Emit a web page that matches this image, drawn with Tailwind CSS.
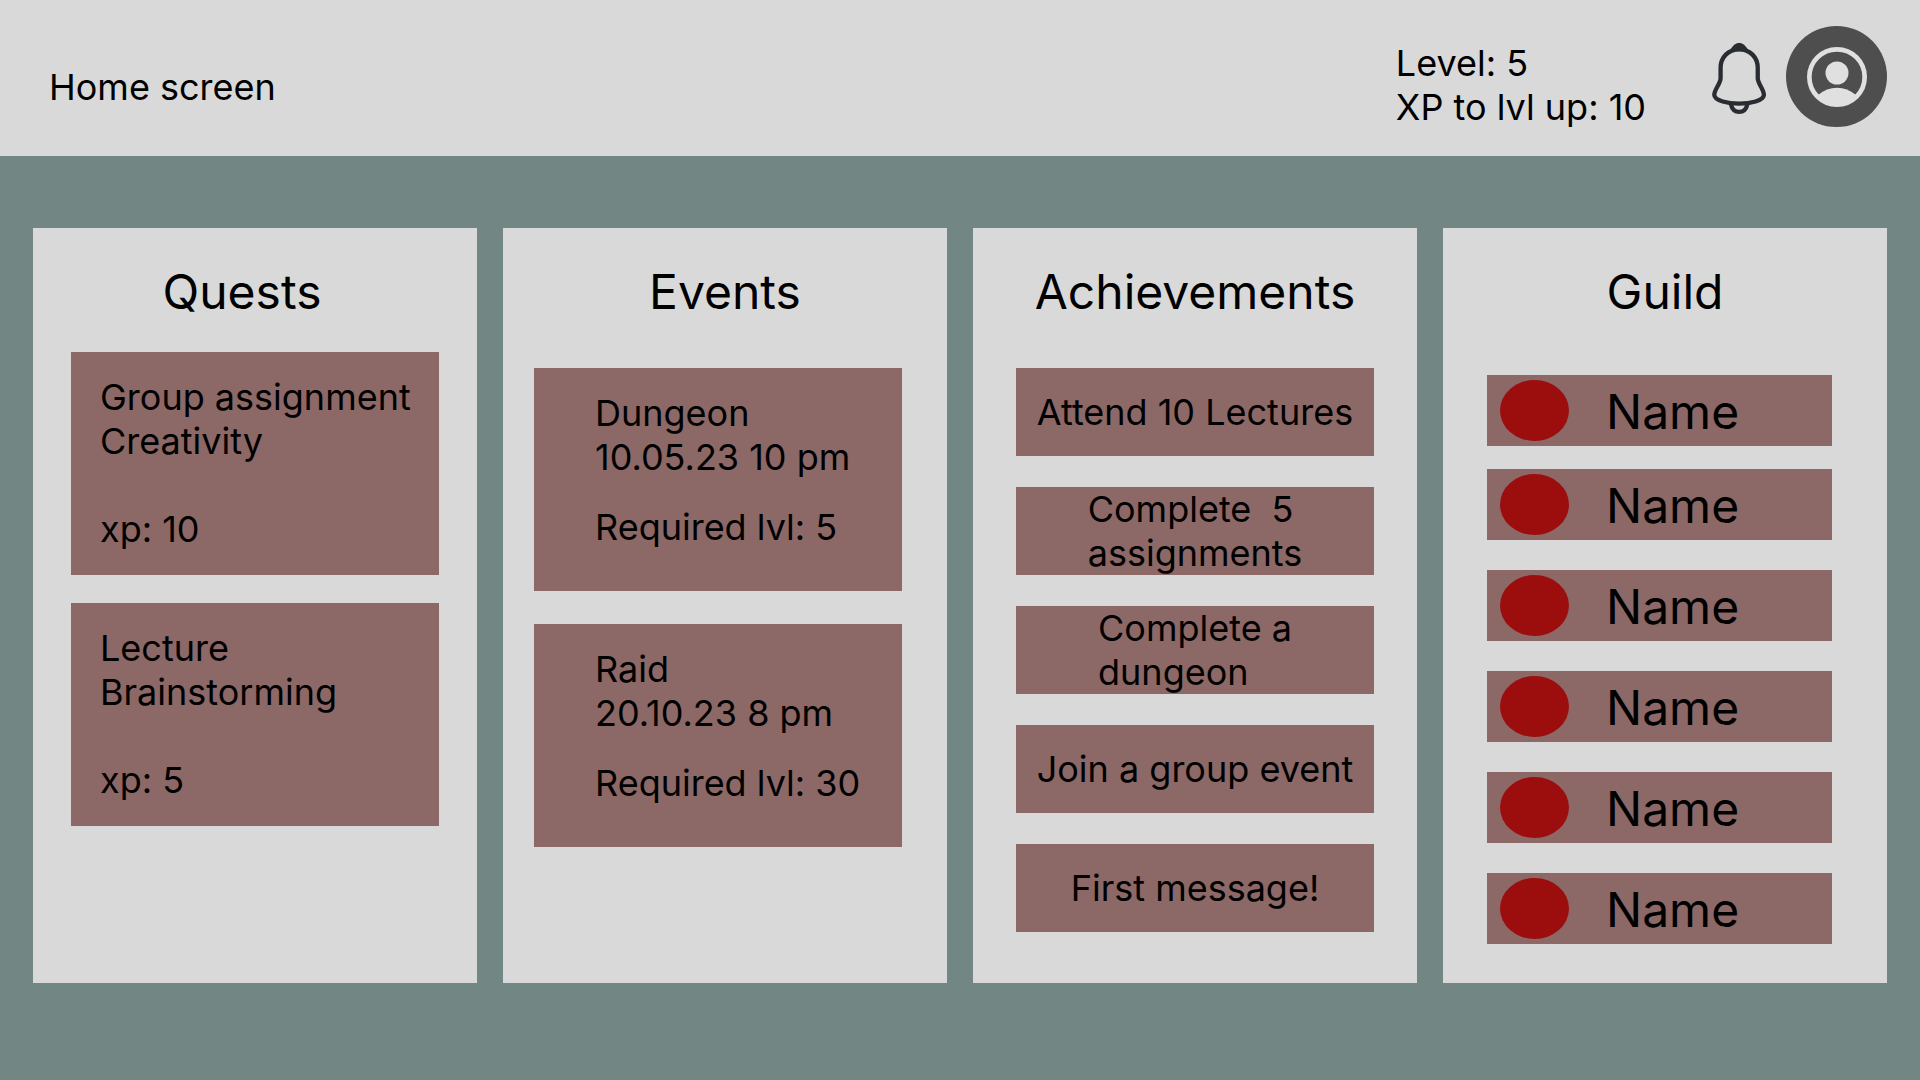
<!DOCTYPE html>
<html lang="en">
<head>
<meta charset="utf-8">
<meta name="viewport" content="width=device-width, initial-scale=1">
<title>Home screen</title>
<script src="https://cdn.jsdelivr.net/npm/@tailwindcss/browser@4"></script>
</head>
<body class="min-h-screen bg-[#728684] font-['Inter',sans-serif] text-[36px] leading-[44px] text-black">
  <header class="flex items-start justify-between bg-[#d9d9d9] pl-[49px] pr-[33px] min-h-[156px]">
    <h1 class="pt-[65px]">Home screen</h1>
    <div class="flex items-start">
      <div class="pt-[41px] mr-[66px]">
        <p>Level: 5</p>
        <p>XP to lvl up: 10</p>
      </div>
      <button type="button" aria-label="Notifications" class="mt-[43px] mr-5">
        <svg class="block w-[54px] h-[71px]" viewBox="156 128 162 214" fill="none" stroke="#292d32" stroke-width="13">
          <path d="M237.500 147C205 147 181.500 171 181.500 203V234C181.500 250 162.500 268 162.500 284C162.500 302 205 311 237.500 311S312 302 312 284C312 268 293.500 250 293.500 234V203C293.500 171 270 147 237.500 147Z"/>
          <path d="M212 147C221 132 229 128 237.500 128S254 132 263 147L250 153H225Z" fill="#292d32" stroke="none"/>
          <path d="M213 314C217 330 227 335.500 237.500 335.500S258 330 262 314"/>
        </svg>
      </button>
      <button type="button" aria-label="Profile" class="mt-[26px]">
        <svg class="block size-[101px]" viewBox="378 78 303 303">
          <circle cx="529.500" cy="229.500" r="151.500" fill="#4e4e4e"/>
          <circle cx="531" cy="231" r="83" fill="none" stroke="#e0e0e0" stroke-width="14"/>
          <circle cx="531" cy="219" r="34.500" fill="#e0e0e0"/>
          <path d="M475 284C492 270 510 263 531 263S570 270 587 284L590 289A83 83 0 0 1 472 289Z" fill="#e0e0e0"/>
        </svg>
      </button>
    </div>
  </header>

  <main class="grid grid-cols-4 gap-[26px] px-[33px] pt-[72px] pb-[97px]">
    <section class="bg-[#d9d9d9] pt-[35px] pb-[39px]">
      <h2 class="pr-[26px] text-center text-[48px] leading-[58px]">Quests</h2>
      <div class="mt-[31px] flex flex-col gap-7 px-[38px]">
        <article class="bg-[#8c6867] pl-[29px] pt-[23px] pb-6">
          <h3>Group assignment</h3>
          <p>Creativity</p>
          <p class="pt-11">xp: 10</p>
        </article>
        <article class="bg-[#8c6867] pl-[29px] pt-[23px] pb-6">
          <h3>Lecture</h3>
          <p>Brainstorming</p>
          <p class="pt-11">xp: 5</p>
        </article>
      </div>
    </section>

    <section class="bg-[#d9d9d9] pt-[35px] pb-[39px]">
      <h2 class="text-center text-[48px] leading-[58px]">Events</h2>
      <div class="mt-[47px] flex flex-col gap-[33px] pl-[31px] pr-[45px]">
        <article class="bg-[#8c6867] pl-[61px] pt-[23px] pb-[42px]">
          <h3>Dungeon</h3>
          <p>10.05.23 10 pm</p>
          <p class="pt-[26px]">Required lvl: 5</p>
        </article>
        <article class="bg-[#8c6867] pl-[61px] pt-[23px] pb-[42px]">
          <h3>Raid</h3>
          <p>20.10.23 8 pm</p>
          <p class="pt-[26px]">Required lvl: 30</p>
        </article>
      </div>
    </section>

    <section class="bg-[#d9d9d9] pt-[35px] pb-[39px]">
      <h2 class="text-center text-[48px] leading-[58px]">Achievements</h2>
      <ul class="mt-[47px] flex flex-col gap-[31px] px-[43px]">
        <li class="flex min-h-[88px] items-center justify-center bg-[#8c6867]"><p>Attend 10 Lectures</p></li>
        <li class="flex min-h-[88px] items-center justify-center bg-[#8c6867]"><p>Complete&nbsp; 5<br>assignments</p></li>
        <li class="flex min-h-[88px] items-center justify-center bg-[#8c6867]"><p>Complete a<br>dungeon</p></li>
        <li class="flex min-h-[88px] items-center justify-center bg-[#8c6867]"><p>Join a group event</p></li>
        <li class="flex min-h-[88px] items-center justify-center bg-[#8c6867]"><p>First message!</p></li>
      </ul>
    </section>

    <section class="bg-[#d9d9d9] pt-[35px] pb-[39px]">
      <h2 class="text-center text-[48px] leading-[58px]">Guild</h2>
      <ul class="mt-[54px] flex flex-col gap-[30px] pl-11 pr-[55px] text-[48px] leading-[58px]">
        <li class="-mb-[7px] flex items-center gap-[37px] bg-[#8c6867] py-[5px] pl-[13px]"><span class="h-[61px] w-[69px] rounded-[50%] bg-[#9c0d0d]"></span><span class="pt-0.5">Name</span></li>
        <li class="flex items-center gap-[37px] bg-[#8c6867] py-[5px] pl-[13px]"><span class="h-[61px] w-[69px] rounded-[50%] bg-[#9c0d0d]"></span><span class="pt-0.5">Name</span></li>
        <li class="flex items-center gap-[37px] bg-[#8c6867] py-[5px] pl-[13px]"><span class="h-[61px] w-[69px] rounded-[50%] bg-[#9c0d0d]"></span><span class="pt-0.5">Name</span></li>
        <li class="flex items-center gap-[37px] bg-[#8c6867] py-[5px] pl-[13px]"><span class="h-[61px] w-[69px] rounded-[50%] bg-[#9c0d0d]"></span><span class="pt-0.5">Name</span></li>
        <li class="flex items-center gap-[37px] bg-[#8c6867] py-[5px] pl-[13px]"><span class="h-[61px] w-[69px] rounded-[50%] bg-[#9c0d0d]"></span><span class="pt-0.5">Name</span></li>
        <li class="flex items-center gap-[37px] bg-[#8c6867] py-[5px] pl-[13px]"><span class="h-[61px] w-[69px] rounded-[50%] bg-[#9c0d0d]"></span><span class="pt-0.5">Name</span></li>
      </ul>
    </section>
  </main>
</body>
</html>
